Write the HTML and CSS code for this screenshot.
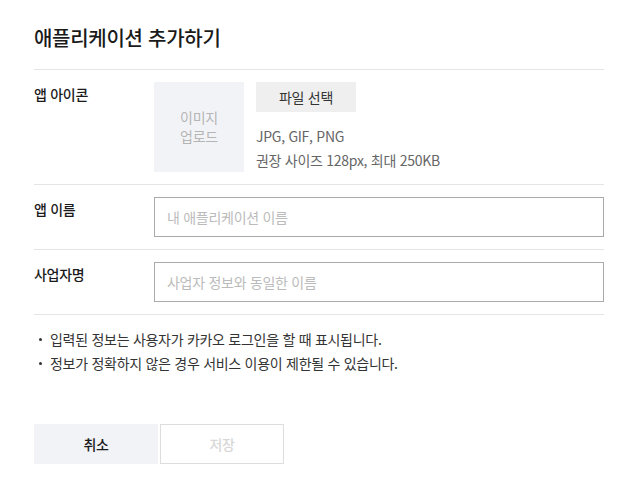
FILE: index.html
```html
<!DOCTYPE html>
<html lang="ko">
<head>
<meta charset="utf-8">
<title>애플리케이션 추가하기</title>
<link rel="stylesheet" href="styles.css">
</head>
<body>
<div class="page">
  <h1 class="title">애플리케이션 추가하기</h1>
  <div class="row">
    <div class="label">앱 아이콘</div>
    <div class="field icon-field">
      <div class="upload-box">이미지<br>업로드</div>
      <div class="upload-info">
        <button class="file-btn" type="button">파일 선택</button>
        <p class="hint">JPG, GIF, PNG</p>
        <p class="hint">권장 사이즈 128px, 최대 250KB</p>
      </div>
    </div>
  </div>
  <div class="row">
    <div class="label">앱 이름</div>
    <div class="field"><input class="text-input" type="text" placeholder="내 애플리케이션 이름"></div>
  </div>
  <div class="row">
    <div class="label">사업자명</div>
    <div class="field"><input class="text-input" type="text" placeholder="사업자 정보와 동일한 이름"></div>
  </div>
  <ul class="notes">
    <li>입력된 정보는 사용자가 카카오 로그인을 할 때 표시됩니다.</li>
    <li>정보가 정확하지 않은 경우 서비스 이용이 제한될 수 있습니다.</li>
  </ul>
  <div class="actions">
    <button class="btn btn-cancel" type="button">취소</button>
    <button class="btn btn-save" type="button" disabled>저장</button>
  </div>
</div>
</body>
</html>
```

FILE: styles.css
```css
* { box-sizing: border-box; }
html, body { margin: 0; padding: 0; background: #fff; }
body {
  font-family: "Noto Sans CJK KR", "Noto Sans", sans-serif;
  color: #222;
  font-size: 14px;
  letter-spacing: -0.02em;
}
.page {
  width: 623px;
  padding: 0 19px 0 34px;
}
.title {
  margin: 0;
  padding: 24px 0 17px;
  font-size: 20px;
  line-height: 28px;
  font-weight: 500;
  color: #1a1a1a;
  border-bottom: 1px solid #e5e5e5;
}
.row {
  display: flex;
  padding: 12px 0;
  border-bottom: 1px solid #e5e5e5;
}
.label {
  width: 120px;
  flex: none;
  line-height: 24px;
  font-weight: 500;
  color: #1a1a1a;
}
.field { flex: 1; }
.icon-field { display: flex; gap: 12px; }
.upload-box {
  width: 90px;
  height: 90px;
  background: #f2f3f7;
  color: #b5b5b5;
  display: flex;
  align-items: center;
  justify-content: center;
  text-align: center;
  line-height: 19px;
}
.upload-info { display: flex; flex-direction: column; align-items: flex-start; }
.file-btn {
  width: 100px;
  height: 30px;
  border: 0;
  background: #efefef;
  font: inherit;
  letter-spacing: inherit;
  color: #333;
  margin-bottom: 12px;
  padding: 0;
}
.hint { margin: 0; line-height: 24px; color: #666; }
.text-input {
  display: block;
  width: 100%;
  height: 40px;
  border: 1px solid #aaa;
  padding: 0 12px;
  font: inherit;
  letter-spacing: inherit;
  color: #222;
  outline: none;
}
.text-input::placeholder { color: #bbb; }
.notes {
  list-style: none;
  margin: 0;
  padding: 12px 0 0;
}
.notes li {
  position: relative;
  padding-left: 16px;
  line-height: 24px;
  color: #333;
}
.notes li::before {
  content: "";
  position: absolute;
  left: 5px;
  top: 11px;
  width: 3px;
  height: 3px;
  border-radius: 50%;
  background: #333;
}
.actions {
  display: flex;
  gap: 2px;
  margin-top: 49px;
}
.btn {
  width: 124px;
  height: 40px;
  font: inherit;
  letter-spacing: inherit;
  font-weight: 500;
  padding: 0;
}
.btn-cancel { background: #f2f3f7; border: 0; color: #1a1a1a; }
.btn-save { background: #fff; border: 1px solid #ddd; color: #d8d8d8; }
```
